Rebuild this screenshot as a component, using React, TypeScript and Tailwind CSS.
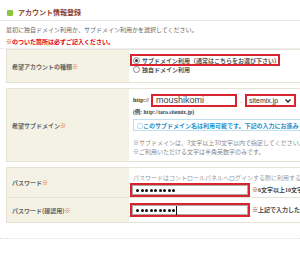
import React from 'react';

const jp = "font-['Noto_Sans_CJK_JP','Noto_Sans',sans-serif]";
const serif = "font-['Liberation_Serif','Noto_Sans_CJK_JP',serif]";

const Req = () => <span className="text-[#ef5a3c]">※</span>;

const Dots = () => (
    <div className="flex items-center gap-[1.5px] pl-[3px]">
        {Array.from({ length: 9 }).map((_, i) => (
            <span key={i} className="w-[3px] h-[3px] rounded-full bg-[#111]" />
        ))}
    </div>
);

const App = () => {
    return (
        <div className={`w-[300px] h-[253px] overflow-hidden bg-white ${jp}`}>
            <div className="w-[430px]">
                {/* Header */}
                <div className="h-[21px] flex items-center gap-[5px] pl-[7px] pt-[5px] border-b border-[#f0e4e4]">
                    <span className="w-[6px] h-[6px] bg-[#8cc63f] rounded-[1px]" />
                    <span className="text-[7px] font-bold text-[#8b3b2b] leading-none">アカウント情報登録</span>
                </div>

                {/* Intro */}
                <div className="pl-[6px] pt-[3px] h-[28px] border-b border-[#eeeeee] text-[6px] leading-[12px]">
                    <p className="text-[#666]">最初に独自ドメイン利用か、サブドメイン利用かを選択してください。</p>
                    <p className="text-[#e60012] font-bold">※のついた箇所は必ずご記入ください。</p>
                </div>

                <div className="pl-[6px] text-[6px]">
                    {/* Row 1 */}
                    <div className="flex h-[34px] border border-[#e6e2d6]">
                        <div className="w-[122px] bg-[#f4f1e5] flex items-center pl-[5px] font-bold text-[#666]">
                            希望アカウントの種類<Req />
                        </div>
                        <div className="flex-1 flex flex-col pl-[1px] pt-[4px] text-[#555] font-bold">
                            <div className="w-[150px] h-[12px] border-2 border-[#d9232e] flex items-center gap-[2px] pl-[1px]">
                                <span className="w-[7px] h-[7px] rounded-full border border-[#888] bg-white flex items-center justify-center">
                                    <span className="w-[3px] h-[3px] rounded-full bg-[#333]" />
                                </span>
                                <span>サブドメイン利用（通常はこちらをお選び下さい）</span>
                            </div>
                            <div className="flex items-center gap-[2px] pl-[3px] mt-[-1px]">
                                <span className="w-[7px] h-[7px] rounded-full border border-[#888] bg-white" />
                                <span>独自ドメイン利用</span>
                            </div>
                        </div>
                    </div>

                    {/* Row 2 */}
                    <div className="flex h-[74px] border border-[#e6e2d6] mt-[5px]">
                        <div className="w-[122px] bg-[#f4f1e5] flex items-center pl-[5px] font-bold text-[#666]">
                            希望サブドメイン<Req />
                        </div>
                        <div className="flex-1 flex flex-col pl-[4px] pt-[5px]">
                            <div className="flex items-center">
                                <span className={`${serif} text-[6px] font-bold text-[#333] w-[18px]`}>http://</span>
                                <div className="w-[86px] h-[13px] border-2 border-[#d9232e] bg-white flex items-center pl-[3px]">
                                    <span className="font-['Liberation_Sans',sans-serif] text-[9px] text-[#444] leading-none">moushikomi</span>
                                </div>
                                <span className="w-[8px] text-center text-[#666]">.</span>
                                <div className="w-[51px] h-[13px] border-2 border-[#d9232e] bg-white flex items-center justify-between pl-[2px] pr-[3px]">
                                    <span className="font-['Liberation_Sans',sans-serif] text-[7px] text-[#333] leading-none">sitemix.jp</span>
                                    <svg width="6" height="4" viewBox="0 0 6 4">
                                        <path d="M0.5 0.5 L3 3 L5.5 0.5" fill="none" stroke="#222" strokeWidth="1.4" />
                                    </svg>
                                </div>
                            </div>
                            <p className={`${serif} text-[5.5px] font-bold text-[#444] leading-[9px] mt-[1px]`}>(例: http://taro.sitemix.jp)</p>
                            <div className="h-[12px] border border-[#bfe0ef] bg-white flex items-center pl-[3px] mt-[2px] text-[#1c8fd1] font-bold whitespace-nowrap">
                                ○このサブドメイン名は利用可能です。下記の入力にお進みください。
                            </div>
                            <div className="text-[#888] leading-[9px] mt-[7px]">
                                <p>※サブドメインは、3文字以上30文字以内で指定してください。</p>
                                <p>※ご利用いただける文字は半角英数字のみです。</p>
                            </div>
                        </div>
                    </div>

                    {/* Row 3 & 4 */}
                    <div className="flex flex-col border border-[#e6e2d6] mt-[5px]">
                        <div className="flex h-[30px] border-b border-[#e6e2d6]">
                            <div className="w-[122px] bg-[#f4f1e5] flex items-center pl-[5px] font-bold text-[#666]">
                                パスワード<Req />
                            </div>
                            <div className="flex-1 flex flex-col pl-[1px] pt-[6px]">
                                <p className="text-[#999] leading-[8px] whitespace-nowrap pl-[3px]">パスワードはコントロールパネルへログインする際に利用するため必ず控えてください。</p>
                                <div className="flex items-center mt-[1px]">
                                    <div className="w-[120px] h-[14px] border-2 border-[#d9232e] bg-white flex items-center">
                                        <div className="w-full h-full border border-[#aaa] flex items-center">
                                            <Dots />
                                        </div>
                                    </div>
                                    <span className={`${serif} font-bold text-[#444] ml-[2px] whitespace-nowrap`}>※6文字以上10文字以内</span>
                                </div>
                            </div>
                        </div>
                        <div className="flex h-[24px]">
                            <div className="w-[122px] bg-[#f4f1e5] flex items-center pl-[5px] font-bold text-[#666]">
                                パスワード(確認用)<Req />
                            </div>
                            <div className="flex-1 flex items-center pl-[1px]">
                                <div className="w-[120px] h-[14px] border-2 border-[#d9232e] bg-white flex items-center">
                                    <div className="w-full h-full border border-[#aaa] flex items-center">
                                        <Dots />
                                        <span className="w-[1px] h-[9px] bg-[#111] ml-[1px]" />
                                    </div>
                                </div>
                                <span className={`${serif} font-bold text-[#444] ml-[2px] whitespace-nowrap`}>※上記で入力したパスワード</span>
                            </div>
                        </div>
                    </div>
                </div>

                <div className="mt-[15px] border-t border-dotted border-[#ddd]" />
            </div>
        </div>
    );
};

export default App;
